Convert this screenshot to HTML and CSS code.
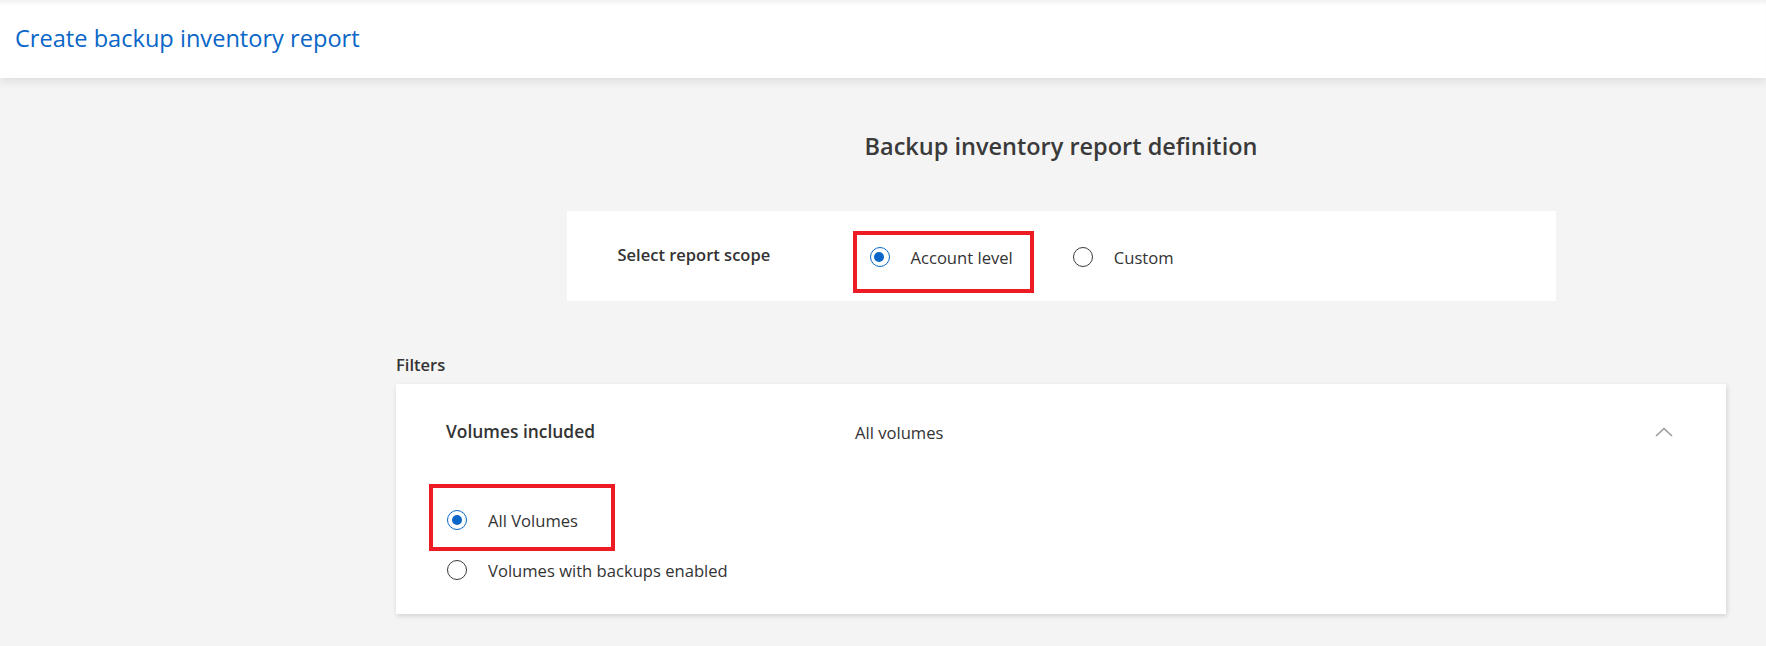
FILE: index.html
```html
<!DOCTYPE html>
<html lang="en">
<head>
<meta charset="utf-8">
<title>Create backup inventory report</title>
<link rel="stylesheet" href="styles.css">
</head>
<body>
<header class="topbar">
  <h1 class="title">Create backup inventory report</h1>
</header>
<main class="content">
  <h2 class="heading">Backup inventory report definition</h2>
  <section class="scope-card">
    <span class="field-label scope-label">Select report scope</span>
    <div class="radio-group">
      <label class="option option-account">
        <span class="radio checked"></span>
        <span class="option-text">Account level</span>
        <span class="annot annot-account"></span>
      </label>
      <label class="option">
        <span class="radio"></span>
        <span class="option-text">Custom</span>
      </label>
    </div>
  </section>
  <div class="filters-label">Filters</div>
  <section class="filter-card">
    <div class="filter-head">
      <span class="field-label filter-name">Volumes included</span>
      <span class="summary">All volumes</span>
      <svg class="chevron" width="18" height="10" viewBox="0 0 18 10" aria-hidden="true">
        <path d="M1 9 L9 1.5 L17 9" fill="none" stroke="#9a9a9a" stroke-width="1.6"/>
      </svg>
    </div>
    <div class="filter-options">
      <label class="option option-all">
        <span class="radio checked"></span>
        <span class="option-text">All Volumes</span>
        <span class="annot annot-all"></span>
      </label>
      <label class="option">
        <span class="radio"></span>
        <span class="option-text">Volumes with backups enabled</span>
      </label>
    </div>
  </section>
</main>
</body>
</html>
```

FILE: styles.css
```css
html, body {
  margin: 0;
  padding: 0;
}
body {
  background: #f4f4f4;
  font-family: "Open Sans", "Noto Sans", "Liberation Sans", sans-serif;
  color: #333333;
  width: 1766px;
  height: 646px;
  overflow: hidden;
}
.topbar {
  height: 78px;
  background: #ffffff;
  display: flex;
  align-items: center;
  padding-left: 15px;
  box-shadow: 0 3px 10px rgba(0, 0, 0, 0.10), inset 0 5px 5px -3px rgba(0, 0, 0, 0.07);
  position: relative;
  z-index: 1;
}
.title {
  margin: 0;
  font-size: 23.6px;
  font-weight: 400;
  color: #0a66c7;
  padding-bottom: 2px;
}
.content {
  padding: 0 40px 0 396px;
}
.heading {
  margin: 0;
  padding-top: 52px;
  height: 84px;
  box-sizing: border-box;
  text-align: center;
  font-size: 23.5px;
  font-weight: 600;
  color: #3a3a3a;
}
.scope-card {
  width: 989px;
  height: 90px;
  margin: 49px auto 0;
  background: #ffffff;
  display: flex;
  align-items: center;
  padding-left: 51px;
  box-sizing: border-box;
}
.field-label {
  font-size: 16.5px;
  font-weight: 600;
  color: #333333;
}
.scope-label {
  width: 252px;
  flex: none;
  margin-top: -3px;
}
.radio-group {
  display: flex;
  align-items: center;
  gap: 60px;
}
.option {
  position: relative;
  display: inline-flex;
  align-items: center;
  gap: 21px;
  height: 24px;
  font-size: 16.6px;
  color: #333333;
}
.scope-card .option {
  margin-top: 2px;
}
.radio {
  width: 20px;
  height: 20px;
  box-sizing: border-box;
  border: 1.6px solid #3a3a3a;
  border-radius: 50%;
  flex: none;
  background: #ffffff;
  position: relative;
}
.radio.checked {
  border-color: #0a66c7;
}
.radio.checked::after {
  content: "";
  position: absolute;
  left: 3.5px;
  top: 3.5px;
  width: 10px;
  height: 10px;
  border-radius: 50%;
  background: #0a66c7;
}
.annot {
  position: absolute;
  border: 4px solid #ed1c24;
  pointer-events: none;
}
.annot-account {
  left: -17px;
  right: -21px;
  top: -14px;
  bottom: -24px;
}
.annot-all {
  left: -18px;
  right: -37px;
  top: -24px;
  bottom: -19px;
}
.filters-label {
  margin-top: 52px;
  font-size: 16.5px;
  font-weight: 600;
  color: #333333;
  height: 30px;
}
.filter-card {
  margin-top: 1px;
  height: 230px;
  background: #ffffff;
  box-shadow: 1px 2px 5px rgba(0, 0, 0, 0.14);
  padding: 0 53px 0 50px;
  box-sizing: border-box;
}
.filter-head {
  display: flex;
  align-items: center;
  height: 96px;
}
.filter-name {
  width: 409px;
  flex: none;
  font-size: 17.4px;
  margin-top: -2px;
}
.summary {
  font-size: 16.6px;
  flex: 1;
}
.chevron {
  flex: none;
}
.filter-options {
  display: flex;
  flex-direction: column;
  align-items: flex-start;
  gap: 26px;
  padding-left: 1px;
  margin-top: 28px;
}
```
